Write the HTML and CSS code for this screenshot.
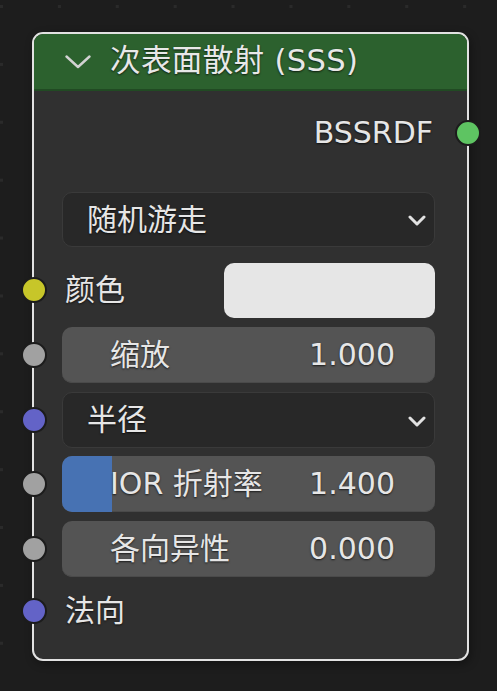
FILE: index.html
```html
<!DOCTYPE html>
<html lang="zh">
<head>
<meta charset="utf-8">
<link rel="stylesheet" href="styles.css">
</head>
<body>
<div class="node">
  <div class="header">
    <svg class="hchev" width="26" height="14" viewBox="0 0 26 14"><path d="M1.5 1.5 L13 12 L24.5 1.5" fill="none" stroke="#d2d2d2" stroke-width="2.4" stroke-linecap="round" stroke-linejoin="round"/></svg>
    <span class="title">次表面散射 (SSS)</span>
  </div>
  <div class="body">
    <div class="row row-out">
      <span class="out-label">BSSRDF</span>
      <i class="sock sock-r green"></i>
    </div>
    <div class="row row-dd">
      <div class="dropdown"><span>随机游走</span><svg class="dchev" width="18" height="11" viewBox="0 0 18 11"><path d="M2 2 L9 9 L16 2" fill="none" stroke="#e2e2e2" stroke-width="3" stroke-linecap="round" stroke-linejoin="round"/></svg></div>
    </div>
    <div class="row row-color">
      <span class="label">颜色</span>
      <div class="swatch"></div>
      <i class="sock yellow"></i>
    </div>
    <div class="row">
      <div class="slider"><span class="s-label">缩放</span><span class="s-val">1.000</span></div>
      <i class="sock grey"></i>
    </div>
    <div class="row">
      <div class="dropdown"><span>半径</span><svg class="dchev" width="18" height="11" viewBox="0 0 18 11"><path d="M2 2 L9 9 L16 2" fill="none" stroke="#e2e2e2" stroke-width="3" stroke-linecap="round" stroke-linejoin="round"/></svg></div>
      <i class="sock purple"></i>
    </div>
    <div class="row row-ior">
      <div class="slider"><div class="fill" style="width:50px"></div><span class="s-label">IOR 折射率</span><span class="s-val">1.400</span></div>
      <i class="sock grey"></i>
    </div>
    <div class="row">
      <div class="slider"><span class="s-label">各向异性</span><span class="s-val">0.000</span></div>
      <i class="sock grey"></i>
    </div>
    <div class="row row-normal">
      <span class="label">法向</span>
      <i class="sock purple"></i>
    </div>
  </div>
</div>
</body>
</html>
```

FILE: styles.css
```css
* { box-sizing: border-box; }

html, body {
  margin: 0;
  padding: 0;
}

body {
  width: 497px;
  height: 691px;
  overflow: hidden;
  background-color: #2a2a2a;
  background-image:
    linear-gradient(90deg, transparent 3px, #1d1d1d 3px),
    linear-gradient(180deg, transparent 3px, #1d1d1d 3px);
  background-size: 57.9px 57.9px;
  background-position: 0 5px;
  font-family: "DejaVu Sans", "Noto Sans CJK SC", sans-serif;
  font-size: 30px;
  line-height: 1;
  color: #e6e6e6;
}

.node {
  margin: 32px 0 0 32px;
  width: 437px;
  height: 629px;
  border: 2px solid #e2e2e2;
  border-radius: 11px;
  background: #303030;
  box-shadow: 2px 3px 8px rgba(0, 0, 0, 0.35);
  display: flex;
  flex-direction: column;
}

.header {
  height: 57px;
  flex: none;
  background: #2c612e;
  border-bottom: 2px solid #214a23;
  border-radius: 9px 9px 0 0;
  display: flex;
  align-items: center;
  padding-left: 31px;
  gap: 19px;
  padding-bottom: 1px;
}

.hchev { flex: none; margin-top: 1px; }

.title {
  font-size: 30.6px;
  letter-spacing: 0.3px;
  color: #e8e8e8;
  text-shadow: 0 1px 2px rgba(0, 0, 0, 0.7);
}

.body {
  display: flex;
  flex-direction: column;
  gap: 9px;
  padding-top: 14px;
}

.row {
  position: relative;
  height: 56px;
  flex: none;
  display: flex;
  align-items: center;
  padding: 0 32px 0 28px;
  text-shadow: 0 1px 2px rgba(0, 0, 0, 0.7);
}

.row-out { justify-content: flex-end; padding-right: 34px; }
.row-dd { margin-top: 22px; height: 55px; }
.row-color { margin-top: 6px; height: 56px; }
.row-ior { margin-top: -1px; }
.row-normal { margin-top: -3px; }

.out-label { color: #e6e6e6; }

.label { margin-left: 3px; }

.swatch {
  margin-left: auto;
  width: 211px;
  height: 55px;
  background: #e6e6e6;
  border-radius: 10px;
}

.dropdown {
  flex: 1;
  height: 100%;
  background: #282828;
  border: 1px solid #3a3a3a;
  border-radius: 10px;
  display: flex;
  align-items: center;
  justify-content: space-between;
  padding: 0 8px 0 24px;
}

.dchev { flex: none; margin-top: 2px; }

.slider {
  position: relative;
  flex: 1;
  height: 100%;
  background: #545454;
  border-radius: 10px;
  overflow: hidden;
  display: flex;
  align-items: center;
  justify-content: space-between;
  padding: 0 40px 0 48px;
  box-shadow: inset 0 -1px 0 #4a4a4a;
}

.fill {
  position: absolute;
  left: 0;
  top: 0;
  bottom: 0;
  background: #4772b3;
}

.s-label, .s-val { position: relative; }

.sock {
  position: absolute;
  left: -13px;
  top: 15px;
  width: 26px;
  height: 26px;
  border-radius: 50%;
  border: 2px solid #1c1c1c;
}

.sock-r { left: auto; right: -14px; }

.green { background: #5ec462; }
.yellow { background: #c7c629; }
.grey { background: #a1a1a1; }
.purple { background: #6363c7; }
```
